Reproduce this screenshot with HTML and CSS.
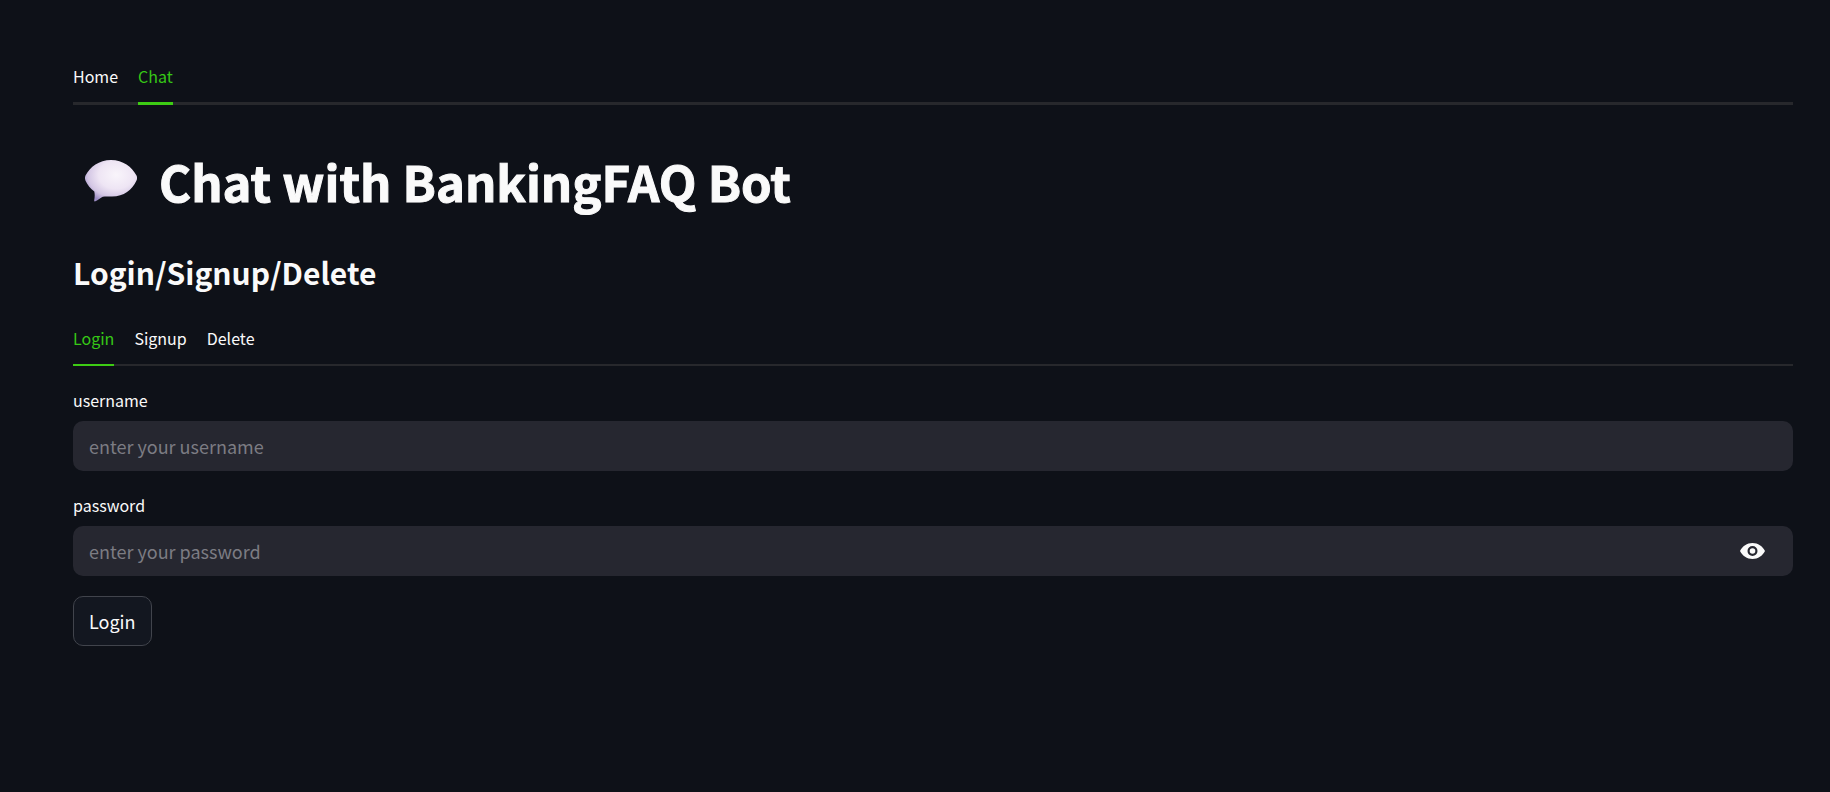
FILE: index.html
```html
<!DOCTYPE html>
<html lang="en">
<head>
<meta charset="utf-8">
<meta name="viewport" content="width=device-width, initial-scale=1">
<title>BankingFAQ Bot</title>
<link rel="stylesheet" href="styles.css">
</head>
<body>
<main class="page">
  <nav class="tabs tabs-main" aria-label="Main">
    <button class="tab" type="button">Home</button>
    <button class="tab active" type="button">Chat</button>
  </nav>
  <h1 class="title">
    <svg class="bubble" viewBox="0 0 52 42" aria-hidden="true">
      <defs>
        <radialGradient id="body" cx="0.6" cy="0.36" r="0.68">
          <stop offset="0" stop-color="#f9f5fb"/>
          <stop offset="0.5" stop-color="#eee5f4"/>
          <stop offset="0.8" stop-color="#d3c6e4"/>
          <stop offset="1" stop-color="#9c8dc4"/>
        </radialGradient>
      </defs>
      <path fill="url(#body)" d="M26 0C38 0 47 7 51.500 15.500C52.300 17 52.300 19 51.500 20.500C47 30 39 36.500 27 36.500C23.500 36.500 20.500 36.200 17.800 36.800C15.500 38 13 40 10.500 41.300C9.600 41.700 9 41.300 9.200 40.300C9.700 37.500 10 34.500 9.300 31.500C5.500 28.700 2.500 25 .5 20.700C-.2 19 -.2 17 .5 15.500C5 7 14 0 26 0Z"/>
    </svg>
    <span>Chat with BankingFAQ Bot</span>
  </h1>
  <h2 class="subtitle">Login/Signup/Delete</h2>
  <div class="tabs" role="group" aria-label="Account">
    <button class="tab active" type="button">Login</button>
    <button class="tab" type="button">Signup</button>
    <button class="tab" type="button">Delete</button>
  </div>
  <form class="form">
    <div class="field">
      <label class="label" for="username">username</label>
      <div class="control">
        <input class="input" id="username" type="text" placeholder="enter your username">
      </div>
    </div>
    <div class="field">
      <label class="label" for="password">password</label>
      <div class="control">
        <input class="input" id="password" type="password" placeholder="enter your password">
        <button class="reveal" type="button" aria-label="Show password">
          <svg class="eye" viewBox="0 0 25 16" aria-hidden="true">
            <path fill="currentColor" fill-rule="evenodd" d="M12.500 0C18 0 22.500 3.200 25 8C22.500 12.800 18 16 12.500 16S2.500 12.800 0 8C2.500 3.200 7 0 12.500 0ZM12.500 3A5 5 0 1 0 12.500 13A5 5 0 1 0 12.500 3Z"/>
            <circle cx="12.500" cy="8" r="2.800" fill="currentColor"/>
          </svg>
        </button>
      </div>
    </div>
    <button class="submit" type="button">Login</button>
  </form>
</main>
</body>
</html>
```
FILE: styles.css
```css
* {
  box-sizing: border-box;
}

body {
  margin: 0;
  background: #0e1118;
  color: #fafafa;
  font-family: "Noto Sans CJK SC", "Open Sans", sans-serif;
  font-size: 16px;
}

button,
input {
  margin: 0;
  font: inherit;
  color: inherit;
}

.page {
  padding: 52px 37px 48px 73px;
}

.tabs {
  display: flex;
  gap: 20px;
  box-shadow: inset 0 -2px #27282c;
}

.tab {
  height: 52px;
  padding: 0 0 2px;
  border: 0;
  border-bottom: 2px solid transparent;
  background: none;
  line-height: 24px;
  cursor: pointer;
}

.tab.active {
  color: #36c816;
  border-bottom-color: #3dcc14;
}

.tabs-main {
  box-shadow: inset 0 -3px #27282c;
}

.tabs-main .tab {
  height: 53px;
  border-bottom-width: 3px;
}

.title {
  display: flex;
  align-items: center;
  gap: 22px;
  margin: 44px 0 0;
  padding-left: 12px;
  font-size: 49px;
  font-weight: 700;
  line-height: 64px;
  -webkit-text-stroke: 1px currentColor;
}

.bubble {
  width: 52px;
  height: 42px;
}

.subtitle {
  margin: 38px 0 0;
  font-size: 30px;
  font-weight: 600;
  line-height: 42px;
}

.subtitle + .tabs {
  margin-top: 21px;
}

.form {
  display: flex;
  flex-direction: column;
  align-items: flex-start;
  gap: 20px;
  margin-top: 20px;
}

.field {
  width: 100%;
}

.label {
  display: block;
  height: 35px;
  line-height: 28px;
}

.control {
  display: flex;
  align-items: center;
  height: 50px;
  border-radius: 10px;
  background: #262730;
}

.input {
  flex: 1;
  min-width: 0;
  height: 100%;
  padding: 0 16px;
  border: 0;
  background: none;
  font-size: 18px;
}

.input::placeholder {
  color: #7c7c83;
  opacity: 1;
}

.reveal {
  display: flex;
  padding: 8px 28px;
  border: 0;
  background: none;
  cursor: pointer;
}

.eye {
  width: 25px;
  height: 16px;
}

.submit {
  height: 50px;
  padding: 0 15px;
  border: 1px solid #41444c;
  border-radius: 10px;
  background: #131720;
  font-size: 18px;
  cursor: pointer;
}
```
